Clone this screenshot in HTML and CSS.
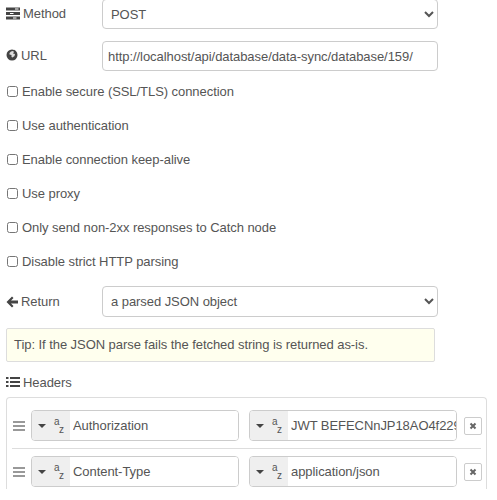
FILE: index.html
```html
<!DOCTYPE html>
<html lang="en">

<head>
    <meta charset="UTF-8">
    <title>HTTP Request</title>
    <link rel="stylesheet" href="styles.css">
</head>

<body>
    <form class="edit-form">
        <div class="form-row method-row">
            <label class="row-label">
                <svg class="icon" viewBox="0 0 14 14"><path d="M0 1.500h14v3H0zM0 6h14v3H0zM0 10.500h14v3H0z" fill="#444"/><path d="M9 2.500h3.500v1H9zM4 7h3.500v1H4zM7 11.500h3.500v1H7z" fill="#fff"/></svg>
                Method
            </label>
            <select class="field">
                <option>POST</option>
            </select>
        </div>
        <div class="form-row url-row">
            <label class="row-label">
                <svg class="icon icon-small" viewBox="0 0 12 12"><circle cx="6" cy="6" r="5.500" fill="#444"/><path d="M5 2.500l2-.5 1 1-1 1.500 2 .5-.5 2-2 1.500-1-.5V6L3.500 5.500 3.500 4z" fill="#ddd"/></svg>
                URL
            </label>
            <input class="field" type="text" value="http://localhost/api/database/data-sync/database/159/">
        </div>

        <label class="check-row first-check"><input type="checkbox">Enable secure (SSL/TLS) connection</label>
        <label class="check-row"><input type="checkbox">Use authentication</label>
        <label class="check-row"><input type="checkbox">Enable connection keep-alive</label>
        <label class="check-row"><input type="checkbox">Use proxy</label>
        <label class="check-row"><input type="checkbox">Only send non-2xx responses to Catch node</label>
        <label class="check-row"><input type="checkbox">Disable strict HTTP parsing</label>

        <div class="form-row return-row">
            <label class="row-label">
                <svg class="icon icon-small" viewBox="0 0 12 12"><path d="M6 .5l1.500 1.500L5 4.500h7v3H5L7.500 10 6 11.500.5 6z" fill="#444"/></svg>
                Return
            </label>
            <select class="field">
                <option>a parsed JSON object</option>
            </select>
        </div>

        <div class="form-tips">Tip: If the JSON parse fails the fetched string is returned as-is.</div>

        <div class="list-label">
            <svg class="icon" viewBox="0 0 14 14"><path d="M0 2h2.500v2H0zM4 2h10v2H4zM0 6h2.500v2H0zM4 6h10v2H4zM0 10h2.500v2H0zM4 10h10v2H4z" fill="#444"/></svg>
            Headers
        </div>

        <div class="header-list">
            <div class="header-item">
                <span class="handle"></span>
                <div class="typed-input">
                    <span class="type-btn"><i class="caret"></i><i class="az"><b>a</b><b>z</b></i></span>
                    <input type="text" value="Authorization">
                </div>
                <div class="typed-input">
                    <span class="type-btn"><i class="caret"></i><i class="az"><b>a</b><b>z</b></i></span>
                    <input type="text" value="JWT BEFECNnJP18AO4f229d0c8e7a61b">
                </div>
                <a class="remove-btn"><svg viewBox="0 0 8 8"><path d="M1.500 1.500l5 5M6.500 1.500l-5 5" stroke="#666" stroke-width="2"/></svg></a>
            </div>
            <div class="header-item">
                <span class="handle"></span>
                <div class="typed-input">
                    <span class="type-btn"><i class="caret"></i><i class="az"><b>a</b><b>z</b></i></span>
                    <input type="text" value="Content-Type">
                </div>
                <div class="typed-input">
                    <span class="type-btn"><i class="caret"></i><i class="az"><b>a</b><b>z</b></i></span>
                    <input type="text" value="application/json">
                </div>
                <a class="remove-btn"><svg viewBox="0 0 8 8"><path d="M1.500 1.500l5 5M6.500 1.500l-5 5" stroke="#666" stroke-width="2"/></svg></a>
            </div>
        </div>
    </form>
</body>

</html>
```

FILE: styles.css
```css
html, body {
    height: 500px;
    overflow: hidden;
}

body {
    margin: 0;
    background: #fff;
    color: #555;
    font-family: "Liberation Sans", Arial, sans-serif;
    font-size: 13px;
    letter-spacing: -0.06px;
}

.edit-form {
    margin-top: -1px;
    padding-left: 6px;
}

.form-row {
    display: flex;
    align-items: center;
}

.url-row {
    margin-top: 12px;
}

.return-row {
    margin-top: 15px;
}

.row-label {
    display: flex;
    align-items: center;
    gap: 3px;
    width: 96px;
    margin-bottom: 2px;
    box-sizing: border-box;
}

.return-row .row-label {
    margin-bottom: 0;
}

.icon {
    width: 14px;
    height: 14px;
    flex: none;
}

.icon-small {
    width: 12px;
    height: 12px;
}

.field {
    width: 336px;
    height: 30px;
    box-sizing: border-box;
    border: 1px solid #ccc;
    border-radius: 4px;
    background: #fff;
    color: #555;
    font-family: inherit;
    font-size: 13px;
    letter-spacing: inherit;
    padding: 0 5px;
}

select.field {
    padding: 0 4px;
}

.return-row select.field {
    height: 31px;
}

.check-row {
    display: flex;
    align-items: center;
    height: 20px;
    margin-top: 14px;
    padding-left: 1px;
}

.first-check {
    margin-top: 10px;
}

.check-row input {
    margin: 0 4px 0 0;
    width: 11px;
    height: 11px;
}

.form-tips {
    width: 429px;
    height: 34px;
    box-sizing: border-box;
    margin-top: 11px;
    padding: 0 7px;
    line-height: 32px;
    background: #ffe;
    border: 1px solid #ddd;
    border-radius: 2px;
}

.list-label {
    display: flex;
    align-items: center;
    gap: 3px;
    margin-top: 11px;
    height: 18px;
}

.header-list {
    width: 481px;
    height: 92px;
    box-sizing: border-box;
    margin-top: 6px;
    border: 1px solid #ddd;
    border-bottom: 0;
    border-radius: 4px 4px 0 0;
    padding: 12px 5px 0 5px;
}

.header-item {
    display: flex;
    align-items: center;
    height: 31px;
}

.header-item + .header-item {
    border-top: 1px solid #ddd;
    margin-top: 7px;
    padding-top: 7px;
}

.handle {
    width: 12px;
    height: 10px;
    margin: 0 6px 0 1px;
    flex: none;
    border-top: 2px solid #999;
    border-bottom: 2px solid #999;
    box-sizing: border-box;
    background: linear-gradient(#999, #999) center / 100% 2px no-repeat;
}

.typed-input {
    display: flex;
    width: 208px;
    height: 31px;
    box-sizing: border-box;
    border: 1px solid #ccc;
    border-radius: 4px;
    overflow: hidden;
    flex: none;
}

.typed-input + .typed-input {
    margin-left: 10px;
}

.type-btn {
    display: flex;
    align-items: center;
    width: 38px;
    flex: none;
    background: #efefef;
}

.caret {
    width: 0;
    height: 0;
    margin-left: 6px;
    border-left: 4px solid transparent;
    border-right: 4px solid transparent;
    border-top: 4px solid #444;
}

.az {
    display: flex;
    flex-direction: column;
    margin-left: 8px;
    font-style: normal;
    font-size: 10px;
    line-height: 8px;
}

.az b {
    font-weight: normal;
}

.az b + b {
    margin-left: 5px;
}

.typed-input input {
    flex: 1;
    min-width: 0;
    border: 0;
    outline: 0;
    padding: 0 0 0 3px;
    color: #555;
    font-family: inherit;
    font-size: 13px;
    letter-spacing: inherit;
}

.remove-btn {
    display: flex;
    align-items: center;
    justify-content: center;
    width: 18px;
    height: 18px;
    margin-left: 7px;
    flex: none;
    box-sizing: border-box;
    border: 1px solid #ccc;
    border-radius: 2px;
}

.remove-btn svg {
    width: 8px;
    height: 8px;
}
```
